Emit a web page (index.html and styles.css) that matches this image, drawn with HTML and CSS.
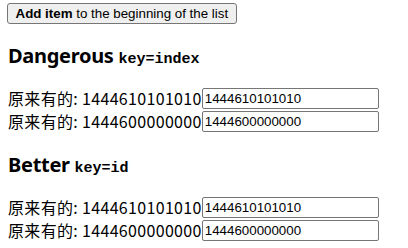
FILE: index.html
```html
<!DOCTYPE html>
<html>
<head>
<meta charset="utf-8">
<link rel="stylesheet" href="styles.css">
</head>
<body>
<button class="add-btn"><b>Add item</b> to the beginning of the list</button>
<section class="block">
  <h3 class="title">Dangerous <code class="key">key=index</code></h3>
  <div class="row"><span class="label">原来有的: 1444610101010</span><input class="field" value="1444610101010"></div>
  <div class="row"><span class="label">原来有的: 1444600000000</span><input class="field" value="1444600000000"></div>
</section>
<section class="block">
  <h3 class="title">Better <code class="key">key=id</code></h3>
  <div class="row"><span class="label">原来有的: 1444610101010</span><input class="field" value="1444610101010"></div>
  <div class="row"><span class="label">原来有的: 1444600000000</span><input class="field" value="1444600000000"></div>
</section>
</body>
</html>
```
FILE: styles.css
```css
html, body {
  background: #fff;
}
body {
  margin: 0;
  padding: 3px 8px;
  color: #000;
  font-family: "Noto Sans CJK SC", "Noto Sans", sans-serif;
}
.add-btn {
  display: block;
  height: 21px;
  margin: 0 0 0 -1px;
  padding: 0 7.5px;
  font: 13.33px "Liberation Sans", Arial, sans-serif;
  color: #000;
  background: #efefef;
  border: 1px solid #767676;
  border-radius: 3px;
}
.add-btn b {
  font-weight: bold;
}
.title {
  margin: 18px 0;
  height: 27px;
  line-height: 27px;
  font-family: "Noto Sans", sans-serif;
  font-size: 20px;
  font-weight: bold;
  letter-spacing: -0.3px;
}
.key {
  font-family: "Liberation Mono", monospace;
  font-size: 15px;
  font-weight: bold;
  letter-spacing: 0;
}
.row {
  display: flex;
  align-items: center;
  height: 23px;
}
.label {
  font-size: 16px;
  line-height: 23px;
  letter-spacing: 0.33px;
  white-space: nowrap;
}
.field {
  box-sizing: border-box;
  width: 177px;
  height: 21px;
  margin: 0;
  padding: 1px 2px;
  font: 13.33px "Liberation Sans", Arial, sans-serif;
  color: #000;
  border: 1px solid #767676;
  border-radius: 2px;
  background: #fff;
}
```
